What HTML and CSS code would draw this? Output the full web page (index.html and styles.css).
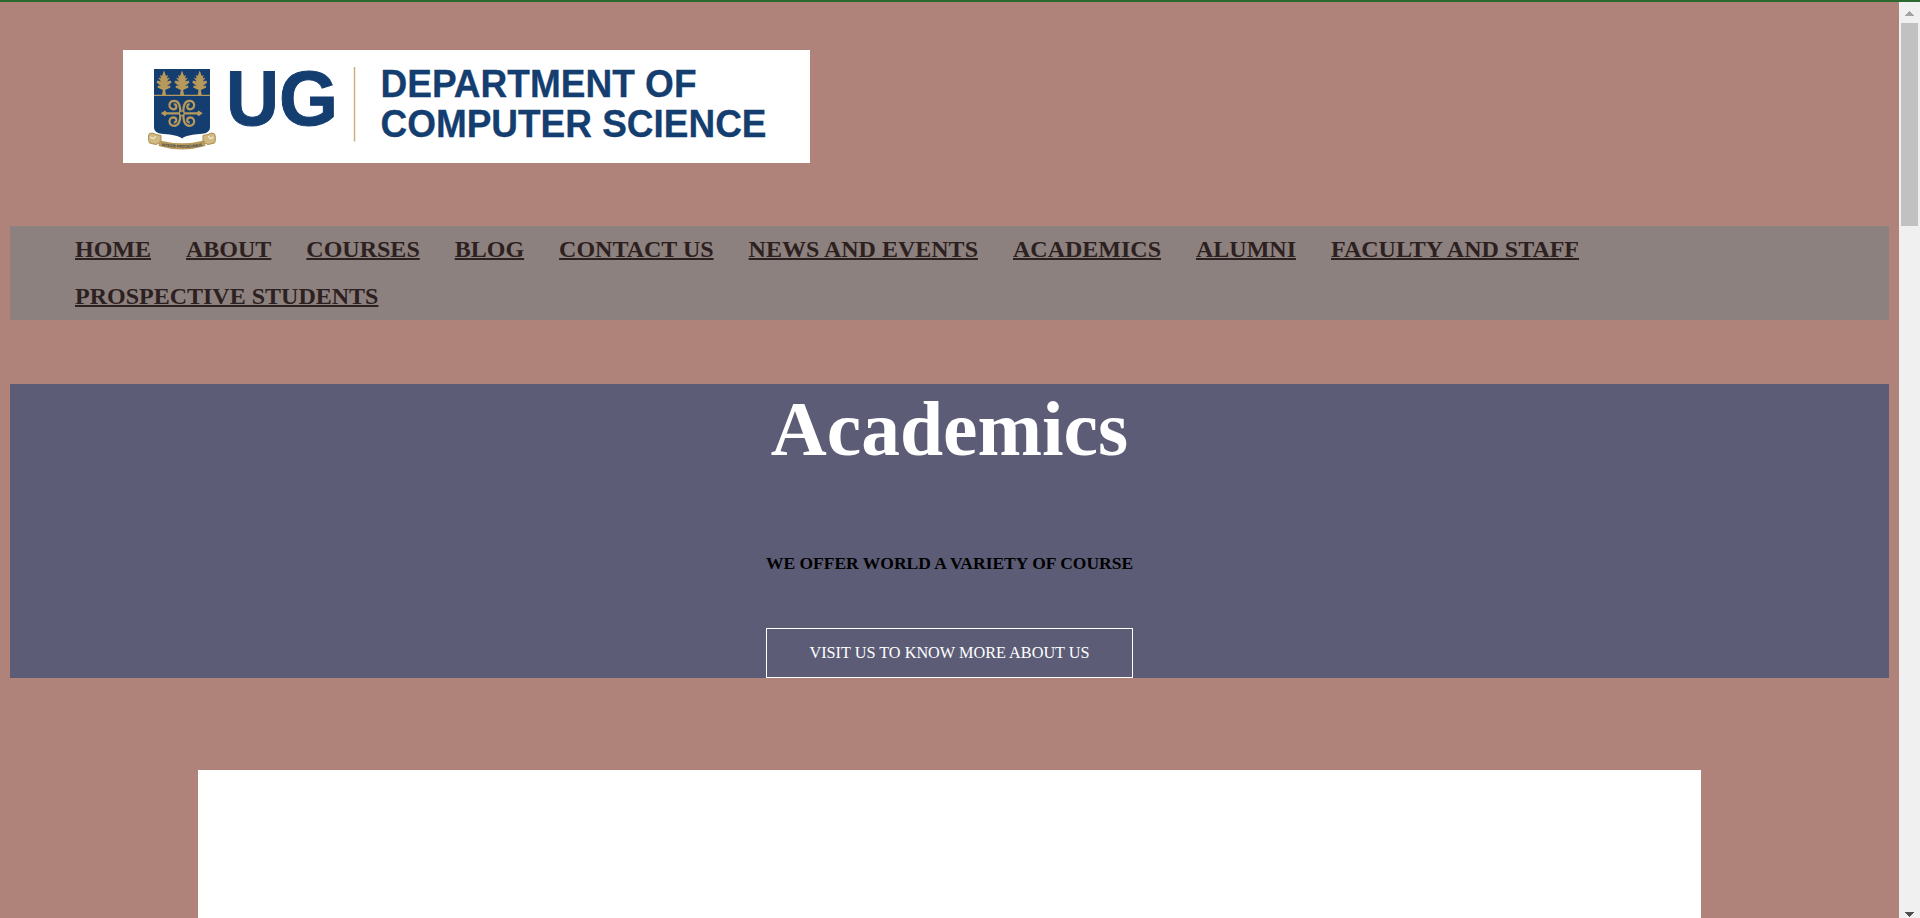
FILE: index.html
```html
<!DOCTYPE html>
<html lang="en">
<head>
<meta charset="utf-8">
<title>Academics</title>
<link rel="stylesheet" href="styles.css">
</head>
<body>
<div class="window">
  <div class="page">
    <header class="header">
      <svg class="logo" viewBox="123 50 687 113" role="img" aria-label="UG Department of Computer Science">
        <defs>
          <g id="tree" class="gold">
            <path d="M-2 0L-1.200 -5L-6.500 -7.500L-6 -9.500L-3 -9L-7.500 -12.500L-6.500 -14.500L-3 -13.500L-6 -17.500L-3 -16.500L-4 -20L-2 -19L0 -24.500L2 -19L4 -20L3 -16.500L6 -17.500L3 -13.500L6.500 -14.500L7.500 -12.500L3 -9L6 -9.500L6.500 -7.500L1.200 -5L2 0Z"/>
          </g>
          <path id="curl" d="M-1.500 -1C-1.500 -6 -2 -12.500 -7.500 -12.500C-13.500 -12.500 -14 -4.500 -8.500 -4C-4.500 -4 -4.500 -9.500 -8 -9"/>
        </defs>
        <path class="navy" d="M154 69H210V127C210 132 206 133.500 200 134C192 134.500 185 136 182 138.500C179 136 172 134.500 164 134C158 133.500 154 132 154 127Z"/>
        <use href="#tree" x="164" y="95"/>
        <use href="#tree" x="182" y="95"/>
        <use href="#tree" x="199.700" y="95"/>
        <path class="gold" d="M154 94.800H210V96H154Z"/>
        <g class="knot" transform="translate(181.800 113.300)">
          <use href="#curl"/>
          <use href="#curl" transform="scale(-1 1)"/>
          <use href="#curl" transform="scale(1 -1)"/>
          <use href="#curl" transform="scale(-1 -1)"/>
          <path d="M-19 0H19M-16 -2L-19 0L-16 2M16 -2L19 0L16 2"/>
          <circle class="navy" r="2.400"/>
        </g>
        <path class="ribbon" d="M149 134C151 132.500 154 133 156 134.500L161 135.500V142L156 144.500L149.500 143C148 140 148.500 136.500 149 134Z"/>
        <path class="ribbon" d="M214.500 134C212.500 132.500 210 133 208 134.500L203 135.500V142L208 144.500L214.500 143C216 140 215.500 136.500 214.500 134Z"/>
        <path class="fold" d="M150 137C153 139 155 139 155.500 136M213.500 137C211 139 209 139 208.500 136"/>
        <path class="band" d="M159.500 140.500Q182 146 204.500 140.500L205.500 146Q182 153 158.500 146Z"/>
        <path id="motto" d="M161.500 146Q182 149.500 203 146" fill="none"/>
        <text class="motto"><textPath href="#motto" textLength="41" lengthAdjust="spacingAndGlyphs">INTEGRI PROCEDAMUS</textPath></text>
        <text class="word word-large" x="226" y="124.700" textLength="53" lengthAdjust="spacingAndGlyphs">U</text>
        <text class="word word-large" x="279" y="124.700" textLength="59" lengthAdjust="spacingAndGlyphs">G</text>
        <path class="rule" d="M354.500 67V141.500"/>
        <text class="word word-small" x="380.500" y="97.200" textLength="316" lengthAdjust="spacingAndGlyphs">DEPARTMENT OF</text>
        <text class="word word-small" x="380.500" y="137" textLength="386" lengthAdjust="spacingAndGlyphs">COMPUTER SCIENCE</text>
      </svg>
    </header>
    <nav class="nav">
      <a class="nav-link" href="#">HOME</a>
      <a class="nav-link" href="#">ABOUT</a>
      <a class="nav-link" href="#">COURSES</a>
      <a class="nav-link" href="#">BLOG</a>
      <a class="nav-link" href="#">CONTACT US</a>
      <a class="nav-link" href="#">NEWS AND EVENTS</a>
      <a class="nav-link" href="#">ACADEMICS</a>
      <a class="nav-link" href="#">ALUMNI</a>
      <a class="nav-link" href="#">FACULTY AND STAFF</a>
      <a class="nav-link" href="#">PROSPECTIVE STUDENTS</a>
    </nav>
    <section class="hero">
      <h1 class="hero-title">Academics</h1>
      <h4 class="hero-subtitle">WE OFFER WORLD A VARIETY OF COURSE</h4>
      <a class="hero-button" href="#">VISIT US TO KNOW MORE ABOUT US</a>
    </section>
    <main class="card"></main>
  </div>
  <div class="scrollbar">
    <svg class="arrow" viewBox="0 0 21 21"><path class="arrow-up" d="M6 14V13H7V12H8V11H9V10H10V9H11V10H12V11H13V12H14V13H15V14Z"/></svg>
    <div class="thumb"></div>
    <svg class="arrow arrow-last" viewBox="0 0 21 21"><path class="arrow-down" d="M6 15H15V16H14V17H13V18H12V19H11V20H10V19H9V18H8V17H7V16H6Z"/></svg>
  </div>
</div>
</body>
</html>
```
FILE: styles.css
```css
* {
  box-sizing: border-box;
}

body {
  margin: 0;
  overflow: hidden;
  background: #af827a;
  font-family: "Liberation Serif", "Times New Roman", serif;
}

.window {
  display: flex;
  height: 918px;
  border-top: 2px solid #2c692f;
}

.page {
  flex: 1;
  display: flex;
  flex-direction: column;
  padding: 48px 10px 0;
  overflow: hidden;
}

.header {
  height: 176px;
  padding-left: 113px;
}

.logo {
  display: block;
  width: 687px;
  height: 113px;
  background: #fff;
}

.navy { fill: #143d70; }
.gold { fill: #b8995c; }

.knot {
  fill: none;
  stroke: #b8995c;
  stroke-width: 2.2;
}

.knot .navy {
  fill: #143d70;
  stroke-width: 1.2;
}

.ribbon {
  fill: #d0b983;
  stroke: #ae8d4c;
  stroke-width: 1;
}

.fold {
  fill: none;
  stroke: #f5eedc;
  stroke-width: 1.2;
}

.band { fill: #b8995c; }

.motto {
  fill: #39424a;
  font: bold 4px "Liberation Sans", Arial, sans-serif;
}

.rule {
  stroke: #c9b27f;
  stroke-width: 1.5;
}

.word {
  fill: #143d70;
  stroke: #143d70;
  font-family: "Liberation Sans", Arial, sans-serif;
  font-weight: bold;
}

.word-large {
  font-size: 78px;
  stroke-width: 1;
}

.word-small {
  font-size: 38px;
  stroke-width: 0.3;
}

.nav {
  display: flex;
  flex-wrap: wrap;
  column-gap: 35px;
  height: 94px;
  padding: 0 300px 0 65px;
  background: #8c817e;
}

.nav-link {
  color: #2d2020;
  font-size: 24px;
  font-weight: bold;
  line-height: 47px;
  white-space: nowrap;
  text-decoration: underline;
  text-decoration-thickness: 2px;
}

.hero {
  display: flex;
  flex-direction: column;
  align-items: center;
  height: 294px;
  margin-top: 64px;
  background: #5c5c77;
}

.hero-title {
  margin: 0;
  padding-top: 1px;
  color: #fff;
  font-size: 77.5px;
  line-height: 89px;
}

.hero-subtitle {
  margin: 79px 0 0;
  color: #000;
  font-size: 17.5px;
  line-height: 20px;
}

.hero-button {
  height: 50px;
  margin-top: auto;
  padding: 15px 42.5px;
  border: 1px solid #fff;
  color: #fff;
  font-size: 16.25px;
  line-height: 18px;
  text-decoration: none;
  white-space: nowrap;
}

.card {
  flex: 1;
  margin: 92px 188px 0;
  background: #fff;
}

.scrollbar {
  display: flex;
  flex-direction: column;
  width: 21px;
  background: #f0f0f0;
}

.arrow {
  width: 21px;
  height: 21px;
}

.arrow-last {
  margin-top: auto;
}

.arrow-up { fill: #a3a3a3; }
.arrow-down { fill: #505050; }

.thumb {
  height: 203px;
  margin: 0 2px;
  background: #c1c1c1;
}
```
